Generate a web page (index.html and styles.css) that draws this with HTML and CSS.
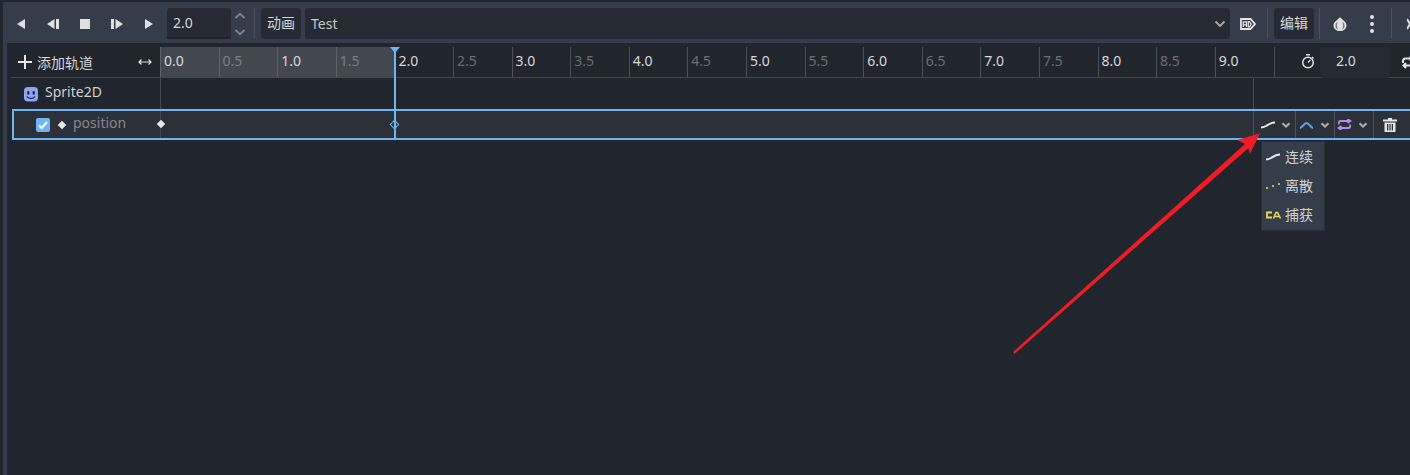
FILE: index.html
```html
<!DOCTYPE html>
<html lang="zh">
<head>
<meta charset="utf-8">
<title>Animation</title>
<link rel="stylesheet" href="styles.css">
</head>
<body>
<div class="panel">
  <div class="toolbar">
    <div class="tb-left">
      <svg class="t1" width="8" height="10" viewBox="0 0 8 10"><path d="M8 0V10L0 5Z" fill="#e0e0e0"/></svg>
      <svg class="t2" width="12" height="10" viewBox="0 0 12 10"><path d="M7.500 0V10L0 5ZM9 0H12V10H9Z" fill="#e0e0e0"/></svg>
      <svg class="t3" width="10" height="10" viewBox="0 0 10 10"><rect width="10" height="10" fill="#e0e0e0"/></svg>
      <svg class="t4" width="12" height="10" viewBox="0 0 12 10"><path d="M0 0H3V10H0ZM4.500 0L12 5L4.500 10Z" fill="#e0e0e0"/></svg>
      <svg class="t5" width="8" height="10" viewBox="0 0 8 10"><path d="M0 0L8 5L0 10Z" fill="#e0e0e0"/></svg>
    </div>
    <div class="spin-input">2.0</div>
    <div class="spin-arrows">
      <svg width="12" height="8" viewBox="0 0 12 8"><path d="M1.500 6L6 1.800L10.500 6" class="chev-dim"/></svg>
      <svg width="12" height="8" viewBox="0 0 12 8"><path d="M1.500 2L6 6.200L10.500 2" class="chev-dim"/></svg>
    </div>
    <span class="vsep s1"></span>
    <div class="flat-btn">动画</div>
    <div class="select"><span>Test</span>
      <svg width="12" height="8" viewBox="0 0 12 8"><path d="M1.500 1.500L6 6L10.500 1.500" class="chev"/></svg>
    </div>
    <span class="tag-icon"><svg width="16" height="12" viewBox="0 0 16 12"><path d="M1 1H10.500L15 6L10.500 11H1Z" fill="none" stroke="#e6e6e6" stroke-width="1.800"/><path d="M3.300 9V3.800H6.500V9M3.300 6.800H6.500M8.300 3.600V8.800H9.600L11.200 6.200L9.600 3.600Z" fill="none" stroke="#e6e6e6" stroke-width="1.200"/></svg></span>
    <span class="vsep s2"></span>
    <div class="flat-btn">编辑</div>
    <span class="vsep s3"></span>
    <span class="onion"><svg width="16" height="16" viewBox="0 0 16 16"><path d="M8 1C6.500 3.500 1.500 5.500 1.500 9.500C1.500 13 4.500 15 8 15C11.500 15 14.500 13 14.500 9.500C14.500 5.500 9.500 3.500 8 1Z" fill="#e0e0e0"/><path d="M5.500 5.500C4 7 3.500 8.500 3.500 10C3.500 11.800 4.500 13 6.300 13.500C5.300 12.500 4.800 11.300 4.800 10C4.800 8.300 5.300 7 5.500 5.500ZM10.500 5.500C12 7 12.500 8.500 12.500 10C12.500 11.800 11.500 13 9.700 13.500C10.700 12.500 11.200 11.300 11.200 10C11.200 8.300 10.700 7 10.500 5.500Z" fill="#6a6f79"/></svg></span>
    <span class="dots"><i></i><i></i><i></i></span>
    <span class="vsep s4"></span>
    <span class="edge-icon"><svg width="12" height="12" viewBox="0 0 12 12"><path d="M0 1L3 6L0 11" fill="none" stroke="#e0e0e0" stroke-width="2"/></svg></span>
  </div>

  <div class="timeline">
    <div class="header">
      <div class="name-col">
        <svg class="plus" width="14" height="14" viewBox="0 0 14 14"><path d="M7 0V14M0 7H14" stroke="#e6e6e6" stroke-width="2"/></svg>
        <span class="add-label">添加轨道</span>
        <svg class="fit" width="14" height="8" viewBox="0 0 14 8"><path d="M1 4H13M3.500 1.500L1 4L3.500 6.500M10.500 1.500L13 4L10.500 6.500" fill="none" stroke="#e0e0e0" stroke-width="1.200"/></svg>
      </div>
      <div class="ruler">
        <div class="tick major in">0.0</div><div class="tick in">0.5</div><div class="tick major in">1.0</div><div class="tick in">1.5</div>
        <div class="tick major">2.0</div><div class="tick">2.5</div><div class="tick major">3.0</div><div class="tick">3.5</div>
        <div class="tick major">4.0</div><div class="tick">4.5</div><div class="tick major">5.0</div><div class="tick">5.5</div>
        <div class="tick major">6.0</div><div class="tick">6.5</div><div class="tick major">7.0</div><div class="tick">7.5</div>
        <div class="tick major">8.0</div><div class="tick">8.5</div><div class="tick major">9.0</div>
      </div>
      <div class="length">
        <svg class="clock" width="14" height="15" viewBox="0 0 14 15"><circle cx="7" cy="8.500" r="5.300" fill="none" stroke="#e0e0e0" stroke-width="1.500"/><path d="M5 .8H9M7 8.500L9.500 6M11 3L12.500 4.500" fill="none" stroke="#e0e0e0" stroke-width="1.400"/></svg>
        <div class="length-input">2.0</div>
        <svg class="loop" width="14" height="14" viewBox="0 0 14 14"><path d="M2 8V6C2 4.500 3 3.500 4.500 3.500H11M9 1L11.500 3.500L9 6M12 6V8C12 9.500 11 10.500 9.500 10.500H3M5 8L2.500 10.500L5 13" fill="none" stroke="#e6e6e6" stroke-width="2"/></svg>
      </div>
    </div>

    <div class="row node-row">
      <div class="name-col">
        <svg class="sprite" width="16" height="16" viewBox="0 0 16 16"><rect x="1" y="1" width="14" height="14.500" rx="4" fill="#8da5f3"/><rect x="4.200" y="5" width="2.200" height="3.800" rx="1.100" fill="#232846"/><rect x="9.600" y="5" width="2.200" height="3.800" rx="1.100" fill="#232846"/><path d="M4 10.500C5.500 13 10.500 13 12 10.500" fill="none" stroke="#232846" stroke-width="1.400"/></svg>
        <span class="node-label">Sprite2D</span>
      </div>
      <div class="row-body node-body"><span class="tools-line"></span></div>
    </div>

    <div class="row track-row">
      <div class="name-col track-name">
        <span class="check"><svg width="14" height="14" viewBox="0 0 14 14"><rect width="14" height="14" rx="2" fill="#6db5f5"/><path d="M3 7.500L5.800 10L11 4" fill="none" stroke="#fff" stroke-width="2"/></svg></span>
        <i class="diamond"></i>
        <span class="track-label">position</span>
      </div>
      <div class="row-body track-body">
        <div class="track-tools">
          <span class="tt tt-a"><svg width="16" height="8" viewBox="0 0 16 8"><path d="M1 6.500C2.500 6.500 4 6.200 6 5C8.500 3.300 11 1.500 15 1.500" fill="none" stroke="#e6e6e6" stroke-width="2"/></svg><svg width="10" height="6" viewBox="0 0 10 6"><path d="M1.500 1.200L5 4.500L8.500 1.200" class="chev-sm"/></svg></span>
          <span class="tt tt-b"><svg width="15" height="8" viewBox="0 0 15 8"><path d="M1 6.800C3.500 6.800 5 2 7.500 2C10 2 11.500 6.800 14 6.800" fill="none" stroke="#56a6ea" stroke-width="2.200"/></svg><svg width="10" height="6" viewBox="0 0 10 6"><path d="M1.500 1.200L5 4.500L8.500 1.200" class="chev-sm"/></svg></span>
          <span class="tt tt-c"><svg width="15" height="11" viewBox="0 0 15 11"><path d="M1.800 5.500V4C1.800 2.800 2.600 2 3.800 2H13M13.200 5.500V7C13.200 8.200 12.400 9 11.200 9H2M10.500 0L13.500 2L10.500 4M4.500 7L1.500 9L4.500 11" fill="none" stroke="#b98be8" stroke-width="1.800"/></svg><svg width="10" height="6" viewBox="0 0 10 6"><path d="M1.500 1.200L5 4.500L8.500 1.200" class="chev-sm"/></svg></span>
          <span class="tt trash"><svg width="14" height="14" viewBox="0 0 14 14"><path d="M5 0H9V1.500H14V3.500H0V1.500H5ZM1.500 4.500H12.500V14H1.500ZM4 6V12.500H5.300V6ZM6.400 6V12.500H7.600V6ZM8.700 6V12.500H10V6Z" fill="#e6e6e6" fill-rule="evenodd"/></svg></span>
        </div>
      </div>
    </div>
    <i class="key key-a"></i>
    <i class="key key-b"></i>
    <div class="playhead"><i class="cap"></i></div>
  </div>
</div>

<div class="menu">
  <div class="menu-item"><svg width="16" height="8" viewBox="0 0 16 8"><path d="M1 6.500C2.500 6.500 4 6.200 6 5C8.500 3.300 11 1.500 15 1.500" fill="none" stroke="#e6e6e6" stroke-width="2"/></svg><span>连续</span></div>
  <div class="menu-item"><svg width="16" height="8" viewBox="0 0 16 8"><rect x="1" y="5" width="2" height="2" fill="#9ec73a"/><rect x="7" y="3" width="2" height="2" fill="#9ec73a"/><rect x="13" y="1" width="2" height="2" fill="#9ec73a"/></svg><span>离散</span></div>
  <div class="menu-item"><svg width="16" height="8" viewBox="0 0 16 8"><path d="M7 1.500H2V6.500H7" fill="none" stroke="#e4d94f" stroke-width="1.800"/><path d="M8.500 7.500L11 1.500H12.500L15.500 7.500M9.500 5.500H14.500" fill="none" stroke="#e4d94f" stroke-width="1.600"/></svg><span>捕获</span></div>
</div>

<svg class="arrow" width="260" height="230" viewBox="0 0 260 230"><path d="M3 222L235 14L227.300 10L250 3.300L240 24L238.300 18.300L4.500 224Z" fill="#ee1c25"/></svg>
</body>
</html>
```

FILE: styles.css
```css
* { box-sizing: border-box; }
html, body { margin: 0; height: 100%; }
body {
  background: #21252d;
  width: 1410px;
  height: 475px;
  overflow: hidden;
  font-family: "Noto Sans", "Noto Sans CJK SC", sans-serif;
  font-size: 14px;
  color: #d6d7d9;
  position: relative;
  padding: 2px 0 0 3px;
}
i { display: block; }
svg { display: block; flex: none; }
.panel { width: 1407px; height: 473px; background: #363d4a; display: flex; flex-direction: column; }

.toolbar { height: 41px; display: flex; align-items: center; padding: 6px 0 4px; flex: none; overflow: hidden; }
.toolbar > * { flex: none; }
.tb-left { width: 164px; display: flex; align-items: center; padding-left: 14px; }
.t2 { margin-left: 22px; }
.t3 { margin-left: 21px; }
.t4 { margin-left: 21px; }
.t5 { margin-left: 22px; }
.spin-input { width: 64px; height: 31px; background: #262a32; border-radius: 3px 3px 0 0; border-bottom: 2px solid #1f2329; padding: 5px 0 0 6px; color: #d6d7d9; }
.spin-arrows { width: 18px; display: flex; flex-direction: column; align-items: center; gap: 8px; }
.chev-dim { fill: none; stroke: #7d828b; stroke-width: 1.800; }
.chev { fill: none; stroke: #a9abb0; stroke-width: 1.800; }
.chev-sm { fill: none; stroke: #a9abb0; stroke-width: 2.200; }
.vsep { width: 1px; height: 31px; background: #4b515d; }
.s1 { margin: 0 6px 0 5px; }
.flat-btn { width: 40px; height: 31px; background: #262a32; border-radius: 3px; text-align: center; line-height: 29px; }
.select { margin-left: 4px; width: 925px; height: 31px; background: #262a32; border-radius: 3px; display: flex; align-items: center; justify-content: space-between; padding: 0 4px 0 6px; color: #c4c6c9; }
.tag-icon { margin-left: 10px; }
.s2 { margin: 0 6px 0 11px; }
.s3 { margin: 0 0 0 5px; }
.onion { margin-left: 12px; }
.dots { margin-left: 19px; width: 10px; display: flex; flex-direction: column; align-items: center; gap: 3px; }
.dots i { width: 4px; height: 4px; border-radius: 50%; background: #e0e0e0; }
.s4 { margin-left: 14px; }
.edge-icon { margin-left: 15px; }

.timeline { margin: 0 0 0 4px; flex: 1; background: #21252d; padding: 4px 0 0 4px; position: relative; overflow: hidden; }
.header { display: flex; height: 31px; border-bottom: 1px solid #43474f; }
.name-col { width: 150px; flex: none; display: flex; align-items: center; border-right: 1px solid #43474f; }
.header .name-col { width: 149px; padding-left: 7px; border-right: 0; }
.add-label { margin-left: 5px; font-size: 14px; color: #d6d7d9; flex: none; }
.fit { margin-left: 45px; }
.ruler { display: flex; flex: none; width: 1114px; height: 30px; }
.tick { width: 58.600px; flex: none; border-left: 1px solid #4c5058; padding: 3px 0 0 3px; font-size: 14px; color: #6b6e74; line-height: 22px; }
.tick.major { color: #d8d9db; }
.tick.in { background: #43474f; border-left-color: #5f6269; color: #7c7f85; }
.tick.major.in { color: #d8d9db; }
.ruler .tick:nth-child(19) { width: 59px; }
.length { flex: 1; display: flex; align-items: center; border-left: 1px solid #4c5058; min-width: 0; padding-left: 26px; }
.clock { margin-top: -1px; flex: none; }
.length-input { width: 70px; height: 31px; background: #262a32; border-radius: 3px; margin-left: 5px; padding-left: 16px; line-height: 28px; color: #d6d7d9; flex: none; }
.loop { margin-left: 11px; flex: none; }

.row { display: flex; }
.node-row { height: 31px; }
.node-row .name-col { padding: 0 0 3px 12px; gap: 6px; }
.sprite { margin-top: 3px; }
.node-label { color: #d0d1d4; line-height: 20px; }
.row-body { flex: 1; min-width: 0; }
.node-body { display: flex; justify-content: flex-end; }
.tools-line { width: 157px; border-left: 1px solid #4c5058; }
.track-row {
  height: 31px;
  margin-left: 1px;
  border: 2px solid #6db5f5;
  border-right: 0;
  background: #2c3039;
}
.track-name { width: 147px; padding-left: 22px; }
.check { display: block; }
.diamond { width: 6px; height: 6px; background: #e6e6e6; transform: rotate(45deg); margin-left: 9px; }
.track-label { margin-left: 8px; color: #84878c; font-size: 14px; position: relative; top: -2px; }
.track-body { display: flex; justify-content: flex-end; }
.track-tools { display: flex; align-items: center; height: 27px; }
.tt { height: 27px; display: flex; align-items: center; border-left: 1px solid #4c5058; width: 39px; gap: 6px; }
.tt-a { width: 42px; padding-left: 6px; gap: 5px; }
.tt-b { padding-left: 3px; }
.tt-c { padding-left: 2px; }
.trash { width: 37px; padding-left: 9px; }

.key { position: absolute; width: 6px; height: 6px; transform: rotate(45deg); top: 78px; }
.key-a { left: 151px; background: #e6e6e6; }
.key-b { left: 384px; width: 7px; height: 7px; background: #2c3039; border: 1.500px solid #6db5f5; }
.playhead { position: absolute; left: 387px; top: 4px; width: 2px; height: 93px; background: #6db5f5; }
.cap { position: absolute; left: -4px; top: 0; width: 0; height: 0; border-left: 5px solid transparent; border-right: 5px solid transparent; border-top: 6px solid #6db5f5; }

.menu { position: absolute; left: 1261px; top: 141px; width: 64px; height: 90px; background: #363d4a; border: 1px solid #2a2e36; display: flex; flex-direction: column; }
.menu-item { height: 29px; flex: none; display: flex; align-items: center; padding-left: 3px; gap: 4px; font-size: 14px; color: #cfd0d3; }
.menu-item span { position: relative; top: -1px; }
.arrow { position: absolute; left: 1010px; top: 130px; pointer-events: none; }
```
